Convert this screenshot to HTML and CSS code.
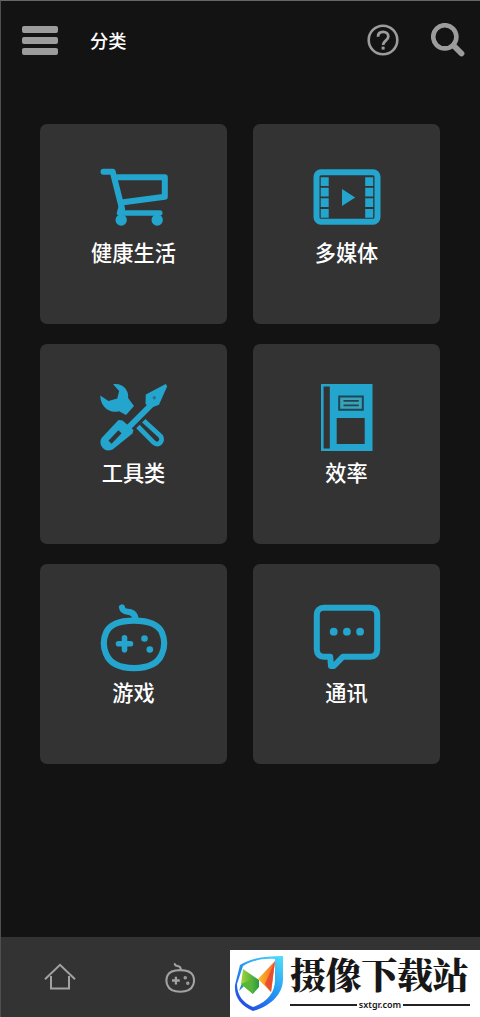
FILE: index.html
```html
<!DOCTYPE html>
<html lang="zh-CN">
<head>
<meta charset="utf-8">
<title>分类</title>
<link rel="stylesheet" href="styles.css">
</head>
<body>
<div class="app">
  <header class="topbar">
    <div class="menu"><span></span><span></span><span></span></div>
    <h1 class="title">分类</h1>
    <svg class="help" width="32" height="32" viewBox="0 0 32 32" fill="none" stroke="#9c9c9c"><circle cx="16" cy="16" r="14.3" stroke-width="2.6"/><path d="M11 12.8C11 9.3 13.2 7.9 16.1 7.9c3 0 5.2 1.7 5.2 4.6 0 4.2-5.2 4.2-5.2 8.5" stroke-width="2.8"/><path d="M16.1 22.6v3" stroke-width="3"/></svg>
    <svg class="search" width="34" height="34" viewBox="0 0 34 34" fill="none" stroke="#9c9c9c"><circle cx="13.8" cy="13.8" r="11.6" stroke-width="4.6"/><path d="M22.5 22.5L30.5 30.5" stroke-width="5.8" stroke-linecap="round"/></svg>
  </header>

  <main class="grid">
    <section class="card">
      <svg class="icon" viewBox="18.5 14 70 68">
        <g class="line round" stroke-width="6"><path d="M23 21.7h9.2L41.6 59" /><path d="M37 27.2h47.3v19.6L41 52.4"/><path d="M41 56l-2 7h40.3" stroke-width="5.4"/></g>
        <circle class="solid" cx="40.7" cy="70" r="5.7"/><circle class="solid" cx="76.7" cy="70" r="5.7"/>
      </svg>
      <h2>健康生活</h2>
    </section>
    <section class="card">
      <svg class="icon" viewBox="17 14 70 68">
        <rect class="line" x="21.5" y="22.3" width="61" height="49.5" rx="4.5" stroke-width="6"/>
        <path class="solid" d="M25.7 27.3h8v8.8h-8zM25.7 37.7h8v8.8h-8zM25.7 48.3h8v8.8h-8zM25.7 58.9h8v8.8h-8zM70.2 27.3h8v8.8h-8zM70.2 37.7h8v8.8h-8zM70.2 48.3h8v8.8h-8zM70.2 58.9h8v8.8h-8zM47 39v17l13.2-8.5z"/>
      </svg>
      <h2>多媒体</h2>
    </section>
    <section class="card">
      <svg class="icon" viewBox="18.5 14 70 68">
        <path class="solid" d="M32.6 14.2C42 12.6 48.7 20 47.6 28L53.5 36l-8 9-7-3.8c-9.4 2.8-18.5-4-18.8-15.6l8.3 5.4 8.8-2.4 1.8-7.6z"/>
        <path class="line" d="M55.5 54.5L73.2 72.6c4.6 4.2 10.4-1.6 6.8-6.6L63 50.5" stroke-width="4.8"/>
        <path d="M48 58L76 30" stroke="#333" stroke-width="11"/>
        <path class="line" d="M45 60.5L73 32.5" stroke-width="6"/>
        <path class="solid" d="M65.3 24.5L85.2 14l1.5 2.3-8.2 18.5-9.5 3.5-4-4.5z"/>
        <circle cx="73.8" cy="27.8" r="1.7" fill="#28758d"/>
        <path class="solid" d="M38 50l4 .5L53 60l-1 3.5L33.4 78.6c-8.8 6.5-17-4.5-11.9-11.1z"/>
        <path d="M29.5 72.3l10-10.5" stroke="#333" stroke-width="4.4"/>
      </svg>
      <h2>工具类</h2>
    </section>
    <section class="card">
      <svg class="icon" viewBox="17 14 70 68">
        <path class="solid" d="M26 14h51.5v67H26z"/>
        <path d="M28.6 16.5h6.2v62h-6.2zM41.7 48h28v26h-28z" fill="#333"/>
        <path d="M44.2 26.4h23.6v13.4H44.2z" fill="#3aa3ba" stroke="#1c4756" stroke-width="2"/><path d="M48.5 30.9h15.3M48.5 35.4h15.3" stroke="#1c4756" stroke-width="1.8"/>
      </svg>
      <h2>效率</h2>
    </section>
    <section class="card">
      <svg class="icon" viewBox="18.5 14 70 68">
        <path class="line round" d="M41.5 17.5c1 5 5 3.7 8.5 4.8 3.3 1 4.5 3.2 5 6.2" stroke-width="6.2"/>
        <path class="line" d="M53.5 30.7c14.5 0 24 3 28 12 2.6 6.2 3 14 0 21-3.6 9.6-12 14.4-28 14.4s-24.4-4.8-28-14.4c-3-7-2.6-14.8 0-21 4-9 13.5-12 28-12z" stroke-width="6.2"/>
        <path class="line round" d="M44 47.8v12M38 53.8h12" stroke-width="5.6"/>
        <circle class="solid" cx="64" cy="48.5" r="3.3"/><circle class="solid" cx="69.3" cy="59.5" r="3.3"/>
      </svg>
      <h2>游戏</h2>
    </section>
    <section class="card">
      <svg class="icon" viewBox="17 14 70 68">
        <path class="line round" d="M29 17.8h46c4.5 0 7.2 2.7 7.2 7.2v34.5c0 4.5-2.7 7.2-7.2 7.2H48L38.8 76H36l-.8-9.3H29c-4.5 0-7.2-2.7-7.2-7.2V25c0-4.5 2.7-7.2 7.2-7.2z" stroke-width="6"/>
        <circle class="solid" cx="38.7" cy="41.7" r="3.9"/><circle class="solid" cx="51.9" cy="41.7" r="3.9"/><circle class="solid" cx="65.1" cy="41.7" r="3.9"/>
      </svg>
      <h2>通讯</h2>
    </section>
  </main>

  <nav class="tabs">
    <svg class="home" width="32" height="28" viewBox="0 0 32 28" fill="none" stroke="#a2a2a2" stroke-width="2"><path d="M1 16.2L16 1.8l15 14.4M7 13v12.5h18V13"/></svg>
    <svg width="32" height="32" viewBox="18 13 70 70" fill="none" stroke="#a2a2a2" stroke-width="4.6"><path d="M41.5 17.5c1 5 5 3.7 8.5 4.8 3.3 1 4.5 3.2 5 6.2" stroke-linecap="round"/><path d="M53.5 30.7c14.5 0 24 3 28 12 2.6 6.2 3 14 0 21-3.6 9.6-12 14.4-28 14.4s-24.4-4.8-28-14.4c-3-7-2.6-14.8 0-21 4-9 13.5-12 28-12z"/><path d="M44 45v17M35.5 53.5h17" stroke-width="5"/><circle cx="64.5" cy="47.5" r="1.5"/><circle cx="70" cy="59.5" r="1.5"/></svg>
  </nav>

  <aside class="brand">
    <svg class="shield" width="50" height="57" viewBox="0 0 50 57">
      <defs><linearGradient id="rim" x1="1" y1="0" x2=".3" y2="1"><stop stop-color="#4fe0fb"/><stop offset=".5" stop-color="#269af3"/><stop offset="1" stop-color="#244de4"/></linearGradient><linearGradient id="leaf" x2="1"><stop stop-color="#a6d43a"/><stop offset="1" stop-color="#249c42"/></linearGradient><linearGradient id="flame" x2="1"><stop stop-color="#ffbd25"/><stop offset="1" stop-color="#f0682c"/></linearGradient></defs>
      <path d="M49 1v23C49 39 37 51 19 56 7 51 0 42 1 30L6 10C17 3 32 1 49 1zM41 4C29 3 17 6 9 11L3 29c0 11 6 19 16 23 15-5 22-15 22-27z" fill="url(#rim)" fill-rule="evenodd"/>
      <path d="M9 25L5 36l7-7z" fill="#1b8dd0"/>
      <path d="M9 14l16 11v7l-6 7L7 29z" fill="url(#leaf)"/><path d="M7 29l10-4 2 14z" fill="#54b735"/>
      <path d="M41 6L24 24l13 13z" fill="url(#flame)"/><path d="M41 6l-4 31-6-8z" fill="#e94d2d"/>
    </svg>
    <div class="wordmark"><strong>摄像下载站</strong><div class="domain"><span>sxtgr.com</span></div></div>
  </aside>
</div>
</body>
</html>
```
FILE: styles.css
```css
* { box-sizing: border-box; }
body { margin: 0; background: #131313; font-family: "Noto Sans CJK SC", sans-serif; }
.app { position: relative; width: 480px; height: 1017px; display: flex; flex-direction: column; overflow: hidden; border-top: 1px solid #646866; border-left: 1px solid #4c5050; background: #131313; }
.topbar { height: 78px; padding-left: 21px; padding-right: 15px; display: flex; align-items: center; }
.menu { display: flex; flex-direction: column; gap: 4px; width: 36px; }
.menu span { height: 7px; border-radius: 2px; background: #9c9c9c; }
.title { margin: 0 0 0 32px; color: #fff; font-size: 18.3px; font-weight: 500; line-height: 28px; }
.help { margin-left: auto; margin-right: 32px; }
.grid { display: grid; grid-template-columns: 187px 187px; grid-auto-rows: 200px; gap: 20px 26px; padding: 45px 39px 0; flex: 1; align-content: start; }
.card { background: #333; border-radius: 7px; display: flex; flex-direction: column; align-items: center; padding-top: 40px; }
.icon { width: 70px; height: 68px; flex: none; overflow: visible; }
.line { fill: none; stroke: #24a5cd; }
.round { stroke-linecap: round; stroke-linejoin: round; }
.solid { fill: #24a5cd; }
.card h2 { margin: 5px 0 0; color: #fff; font-size: 21.2px; font-weight: 500; line-height: 30px; }
.tabs { height: 80px; background: #333; display: flex; padding: 25px 0 0 43px; gap: 88px; flex: none; }
.home { margin-top: 1px; }
.brand { position: absolute; right: 0; bottom: 0; width: 250px; height: 67px; background: #fff; display: flex; padding: 4px 0 0 4px; color: #171717; }
.shield { flex: none; margin-top: 1px; }
.wordmark { width: 180px; margin-left: 6px; }
.wordmark strong { display: block; font-family: "Noto Serif CJK SC", "Noto Sans CJK SC", serif; font-size: 36px; font-weight: 900; line-height: 40px; height: 44px; white-space: nowrap; letter-spacing: -.4px; }
.domain { display: flex; align-items: center; gap: 2px; height: 14px; font-family: "Noto Sans", sans-serif; font-size: 9px; font-weight: 600; line-height: 14px; }
.domain::before, .domain::after { content: ""; height: 2px; flex: 1; background: #222; }
```
